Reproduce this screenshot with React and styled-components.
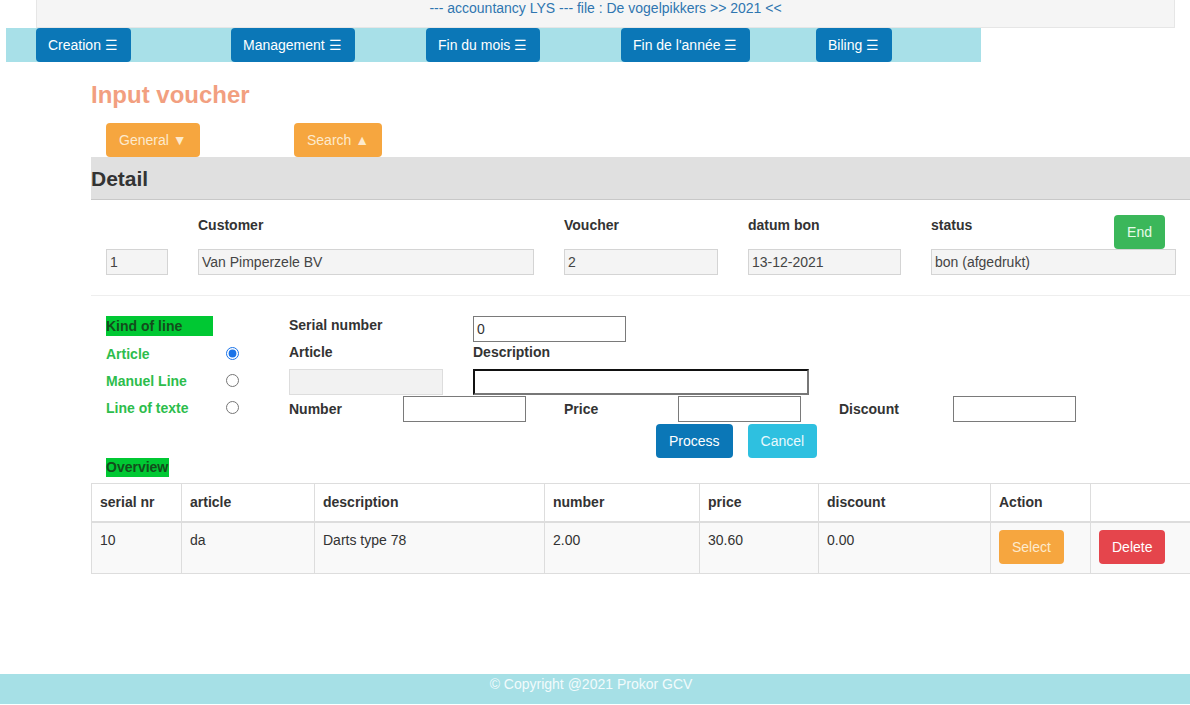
import React from "react";
import styled, { createGlobalStyle } from "styled-components";

const Global = createGlobalStyle`
  html, body { margin: 0; padding: 0; background: #fff; }
  body {
    font-family: "Liberation Sans", Arial, sans-serif;
    font-size: 14px;
    color: #333;
    overflow: hidden;
  }
  * { box-sizing: border-box; }
`;

const Page = styled.div`
  width: 1190px;
  min-height: 704px;
  display: flex;
  flex-direction: column;
`;

const TopWell = styled.div`
  margin-left: 36px;
  width: 1139px;
  height: 28px;
  background: #f5f5f5;
  border: 1px solid #e6e6e6;
  border-top: none;
  color: #2f76b0;
  text-align: center;
  line-height: 16px;
`;

const NavBar = styled.nav`
  margin-left: 6px;
  width: 975px;
  height: 34px;
  background: #a8e0e8;
  display: grid;
  grid-template-columns: repeat(5, 195px);
`;

const NavButton = styled.button`
  justify-self: start;
  margin-left: 30px;
  height: 34px;
  padding: 0 13px 0 12px;
  border: none;
  border-radius: 4px;
  background: #0b77b7;
  color: #fff;
  font-family: inherit;
  font-size: 14px;
`;

const Main = styled.main`
  margin-left: 91px;
  display: flex;
  flex-direction: column;
`;

const Title = styled.h3`
  margin: 20px 0 0;
  font-size: 24px;
  line-height: 26px;
  font-weight: bold;
  color: #f29f80;
`;

const ToggleRow = styled.div`
  margin-top: 15px;
  padding-left: 15px;
  display: grid;
  grid-template-columns: 188px 188px;
`;

const Btn = styled.button`
  justify-self: start;
  height: 34px;
  padding: 0 13px;
  border: none;
  border-radius: 4px;
  font-family: inherit;
  font-size: 14px;
  background: ${(p) => p.$bg};
  color: ${(p) => p.$fg || "#fff"};
`;

const DetailBand = styled.div`
  height: 43px;
  background: #e0e0e0;
  border-bottom: 1px solid #c8c8c8;
  font-size: 21px;
  font-weight: bold;
  line-height: 43px;
  color: #333;
`;

const DetailGrid = styled.div`
  padding: 15px 0 0 15px;
  display: grid;
  grid-template-columns: 62px 336px 154px 153px 245px;
  grid-template-rows: 34px 26px;
  column-gap: 30px;
`;

const Label = styled.label`
  font-weight: bold;
  line-height: 20px;
  color: #333;
`;

const StatusHead = styled.div`
  display: flex;
  justify-content: space-between;
  align-items: flex-start;
  padding-right: 11px;
`;

const ReadOnly = styled.div`
  height: 26px;
  padding: 0 3px;
  background: #f4f4f4;
  border: 1px solid #d4d4d4;
  line-height: 24px;
  color: #444;
`;

const Rule = styled.hr`
  margin: 20px 0 0;
  border: none;
  border-top: 1px solid #eee;
`;

const LineSection = styled.div`
  padding: 20px 0 0 15px;
  display: flex;
`;

const KindCol = styled.div`
  width: 183px;
  display: flex;
  flex-direction: column;
  gap: 7px;
`;

const Tag = styled.div`
  align-self: flex-start;
  width: ${(p) => p.$w}px;
  height: ${(p) => p.$h || 20}px;
  background: #00c833;
  color: #134d1c;
  font-weight: bold;
  line-height: ${(p) => p.$h || 20}px;
`;

const KindRow = styled.div`
  display: grid;
  grid-template-columns: 120px 20px;
  align-items: center;
  height: 20px;
  padding-top: 1px;
  color: #2dbd4c;
  font-weight: bold;
`;

const Radio = styled.input`
  margin: 0;
  width: 13px;
  height: 13px;
  accent-color: #1a73e8;
`;

const FieldsCol = styled.div`
  display: flex;
  flex-direction: column;
`;

const FieldRow = styled.div`
  display: flex;
  align-items: ${(p) => p.$align || "center"};
  height: ${(p) => p.$h}px;
  margin-top: ${(p) => p.$mt || 0}px;
  padding-top: ${(p) => p.$pt || 0}px;
`;

const FieldLabel = styled.div`
  width: ${(p) => p.$w}px;
  font-weight: bold;
  line-height: 18px;
  color: #333;
`;

const Field = styled.div`
  width: ${(p) => p.$w}px;
  height: 26px;
  margin-right: ${(p) => p.$mr || 0}px;
  padding: 0 3px;
  line-height: 24px;
  background: ${(p) => (p.$disabled ? "#f2f2f2" : "#fff")};
  border: 1px solid ${(p) => (p.$disabled ? "#ddd" : "#7a7a7a")};
  ${(p) =>
    p.$focus &&
    `border: 2px solid #777; border-top-color: #111; border-left-color: #111;`}
  color: #333;
`;

const ActionRow = styled.div`
  margin-top: 2px;
  padding-left: 367px;
  display: flex;
  gap: 15px;
`;

const OverviewWrap = styled.div`
  padding-left: 15px;
`;

const Table = styled.table`
  margin-top: 6px;
  width: 1110px;
  border-collapse: collapse;
  table-layout: fixed;
  border: 1px solid #ddd;
  color: #333;
`;

const Th = styled.th`
  width: ${(p) => p.$w}px;
  height: 38px;
  padding: 0 8px;
  text-align: left;
  font-weight: bold;
  border: 1px solid #ddd;
  border-bottom: 2px solid #ddd;
  background: #fff;
`;

const Td = styled.td`
  height: 52px;
  padding: 7px 8px 9px;
  vertical-align: top;
  line-height: 20px;
  border: 1px solid #ddd;
  background: #f9f9f9;
`;

const Footer = styled.footer`
  margin-top: auto;
  height: 30px;
  padding-right: 8px;
  background: #a6e0e6;
  color: #f2fbfc;
  text-align: center;
  line-height: 20px;
`;

const navItems = ["Creation", "Management", "Fin du mois", "Fin de l'année", "Biling"];

const cols = [
  ["serial nr", 90],
  ["article", 133],
  ["description", 230],
  ["number", 155],
  ["price", 119],
  ["discount", 172],
  ["Action", 100],
  ["", 111],
];

export default function App() {
  return (
    <Page>
      <Global />
      <TopWell>--- accountancy LYS --- file : De vogelpikkers &gt;&gt; 2021 &lt;&lt;</TopWell>
      <NavBar>
        {navItems.map((n) => (
          <NavButton key={n}>{n} ☰</NavButton>
        ))}
      </NavBar>
      <Main>
        <Title>Input voucher</Title>
        <ToggleRow>
          <Btn $bg="#f6a63f" $fg="#fdeacd">General ▼</Btn>
          <Btn $bg="#f6a63f" $fg="#fdeacd">Search ▲</Btn>
        </ToggleRow>
        <DetailBand>Detail</DetailBand>
        <DetailGrid>
          <span />
          <Label>Customer</Label>
          <Label>Voucher</Label>
          <Label>datum bon</Label>
          <StatusHead>
            <Label>status</Label>
            <Btn $bg="#3bb75a" $fg="#e6fbe9">End</Btn>
          </StatusHead>
          <ReadOnly>1</ReadOnly>
          <ReadOnly>Van Pimperzele BV</ReadOnly>
          <ReadOnly>2</ReadOnly>
          <ReadOnly>13-12-2021</ReadOnly>
          <ReadOnly>bon (afgedrukt)</ReadOnly>
        </DetailGrid>
        <Rule />
        <LineSection>
          <KindCol>
            <Tag $w={107}>Kind of line</Tag>
            <KindRow>
              <span>Article</span>
              <Radio type="radio" name="kind" defaultChecked />
            </KindRow>
            <KindRow>
              <span>Manuel Line</span>
              <Radio type="radio" name="kind" />
            </KindRow>
            <KindRow>
              <span>Line of texte</span>
              <Radio type="radio" name="kind" />
            </KindRow>
          </KindCol>
          <FieldsCol>
            <FieldRow $h={26} $align="flex-start">
              <FieldLabel $w={184}>Serial number</FieldLabel>
              <Field $w={153}>0</Field>
            </FieldRow>
            <FieldRow $h={27} $align="flex-start" $pt={1}>
              <FieldLabel $w={184}>Article</FieldLabel>
              <FieldLabel $w={200}>Description</FieldLabel>
            </FieldRow>
            <FieldRow $h={26}>
              <Field $w={154} $mr={30} $disabled />
              <Field $w={336} $focus />
            </FieldRow>
            <FieldRow $h={26} $mt={1}>
              <FieldLabel $w={114}>Number</FieldLabel>
              <Field $w={123} $mr={38} />
              <FieldLabel $w={114}>Price</FieldLabel>
              <Field $w={123} $mr={38} />
              <FieldLabel $w={114}>Discount</FieldLabel>
              <Field $w={123} />
            </FieldRow>
            <ActionRow>
              <Btn $bg="#0b77b7">Process</Btn>
              <Btn $bg="#2ec0e0" $fg="#e9f9fd">Cancel</Btn>
            </ActionRow>
          </FieldsCol>
        </LineSection>
        <OverviewWrap>
          <Tag $w={63} $h={19}>Overview</Tag>
        </OverviewWrap>
        <Table>
          <thead>
            <tr>
              {cols.map(([c, w], i) => (
                <Th key={i} $w={w}>{c}</Th>
              ))}
            </tr>
          </thead>
          <tbody>
            <tr>
              <Td>10</Td>
              <Td>da</Td>
              <Td>Darts type 78</Td>
              <Td>2.00</Td>
              <Td>30.60</Td>
              <Td>0.00</Td>
              <Td>
                <Btn $bg="#f6a63f" $fg="#fdeacd">Select</Btn>
              </Td>
              <Td>
                <Btn $bg="#e5454c">Delete</Btn>
              </Td>
            </tr>
          </tbody>
        </Table>
      </Main>
      <Footer>© Copyright @2021 Prokor GCV</Footer>
    </Page>
  );
}
